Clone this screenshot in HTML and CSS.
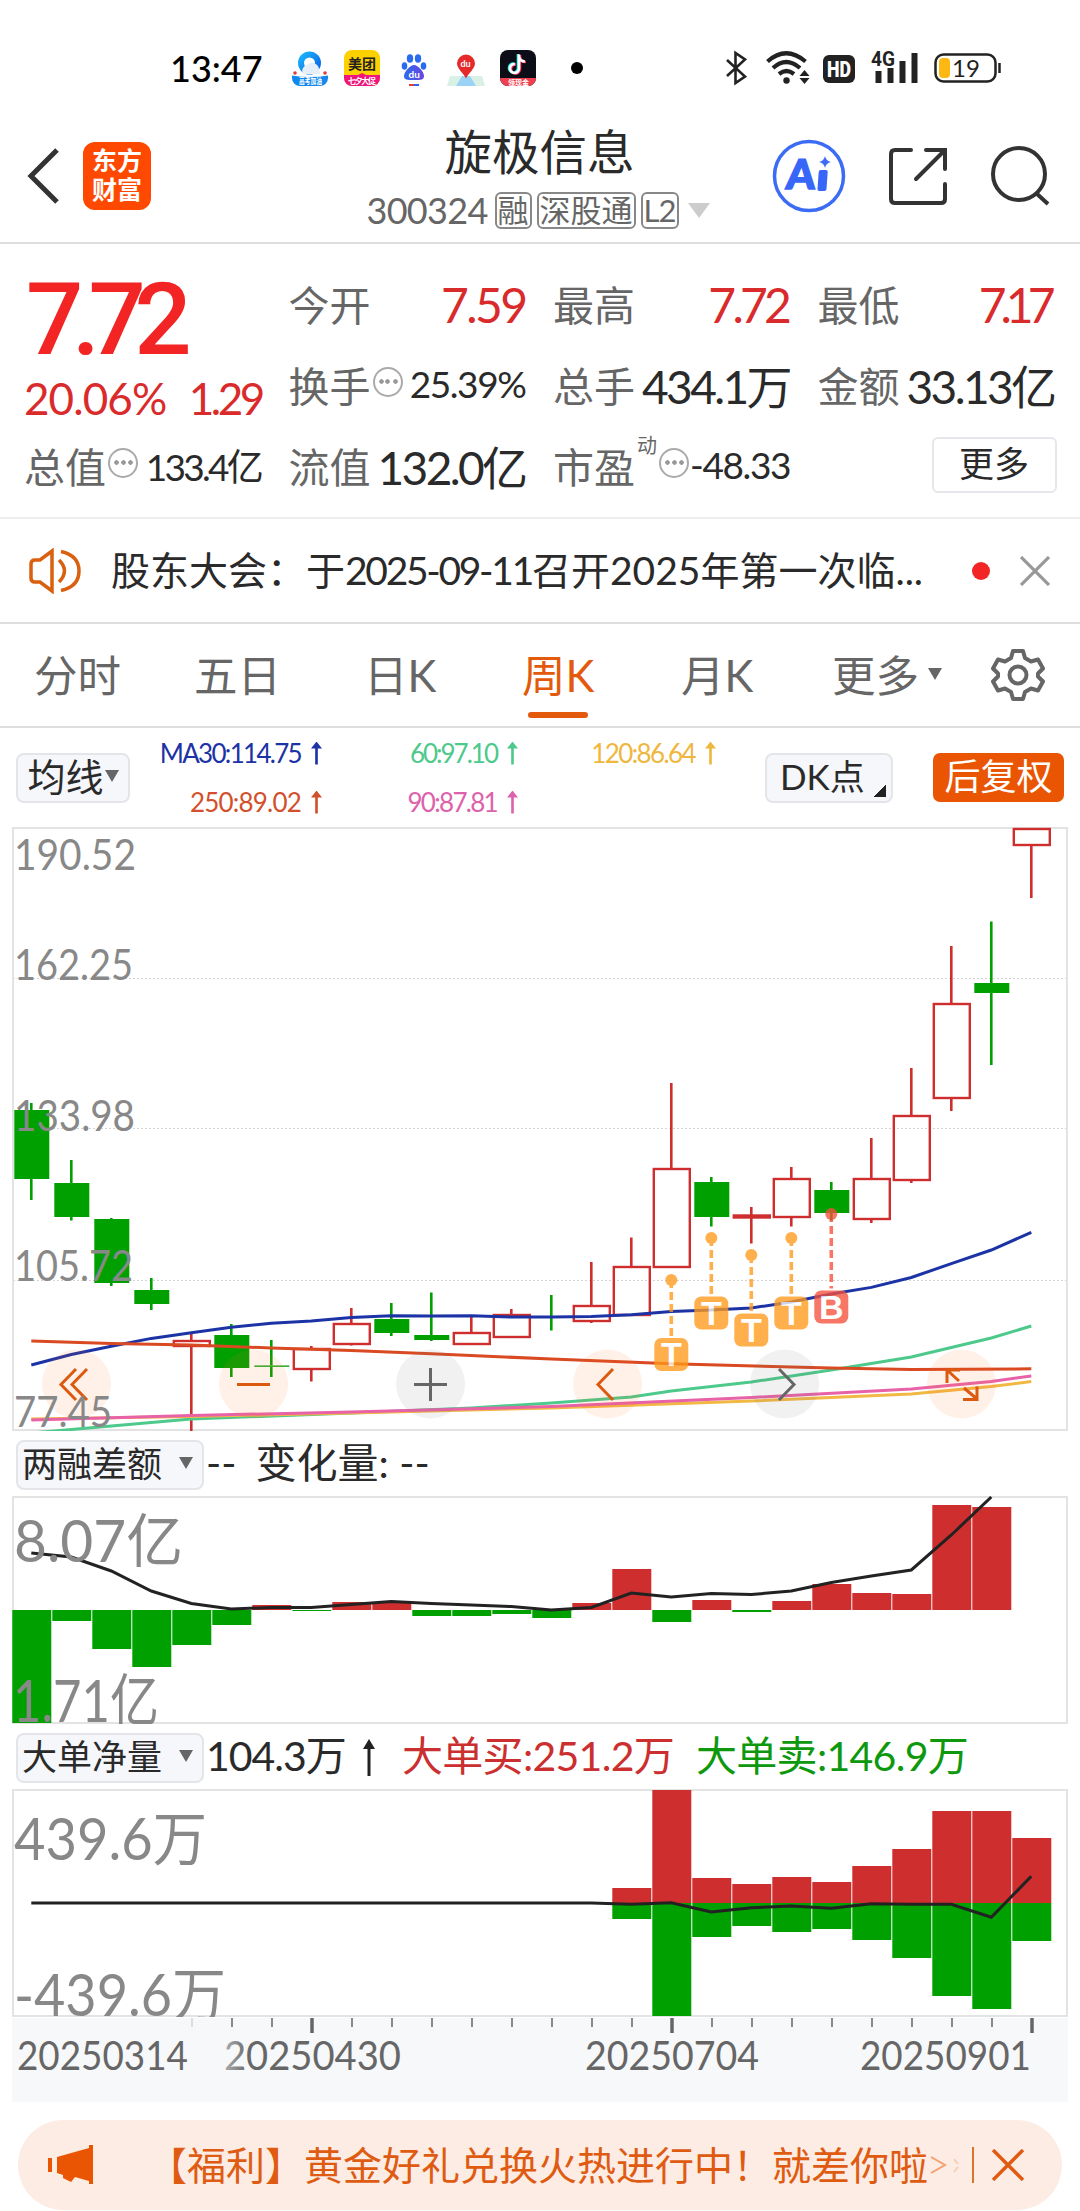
FILE: index.html
```html
<!DOCTYPE html>
<html lang="zh-CN">
<head>
    <meta charset="UTF-8">
    <meta name="viewport" content="width=device-width, initial-scale=1.0">
    <title>旋极信息 300324</title>
    <link rel="stylesheet" href="styles.css">
</head>
<body>
    <div class="status-bar">
        <span class="clock">13:47</span>
        <svg class="apps" width="300" height="40" viewBox="290 48 300 40">
            <defs>
                <linearGradient id="sky" x1="0" y1="0" x2="1" y2="1">
                    <stop offset="0" stop-color="#1cb4fa"/>
                    <stop offset="1" stop-color="#0a63e8"/>
                </linearGradient>
                <linearGradient id="paw" x1="0" y1="0" x2="1" y2="0">
                    <stop offset="0" stop-color="#2a6cf0"/>
                    <stop offset="1" stop-color="#6a45e0"/>
                </linearGradient>
                <clipPath id="r1"><rect x="292" y="50" width="36" height="36" rx="8"/></clipPath>
                <clipPath id="r2"><rect x="344" y="50" width="36" height="36" rx="8"/></clipPath>
                <clipPath id="r3"><rect x="500" y="50" width="36" height="36" rx="8"/></clipPath>
            </defs>
            <circle cx="309.500" cy="63" r="8.500" fill="none" stroke="url(#sky)" stroke-width="6"/>
            <path d="M303 74a6 6 0 0 1 4-9 7 7 0 0 1 12 4l1 5z" fill="#e6eef8"/>
            <g clip-path="url(#r1)">
                <path d="M290 75q20 4 40 0v12h-40z" fill="#1287ee"/>
                <circle cx="295" cy="73" r="1.800" fill="#e23b3b"/>
                <circle cx="325" cy="73" r="1.800" fill="#e23b3b"/>
            </g>
            <text x="299" y="84" font-size="8" font-weight="700" fill="#fff" textLength="23" lengthAdjust="spacingAndGlyphs">高考加油</text>
            <g clip-path="url(#r2)">
                <rect x="344" y="50" width="36" height="36" fill="#fdd000"/>
                <path d="M344 75h14l4-2 4 2h14v12h-36z" fill="#f0147c"/>
            </g>
            <text x="348" y="69" font-size="14" font-weight="700" fill="#222" textLength="28">美团</text>
            <text x="348" y="84" font-size="8" font-weight="700" fill="#fff" textLength="28">七夕大促</text>
            <g fill="#2a6cf0">
                <ellipse cx="404.500" cy="66" rx="2.800" ry="3.800"/>
                <ellipse cx="410" cy="58.500" rx="3.200" ry="4.200"/>
                <ellipse cx="418" cy="58.500" rx="3.200" ry="4.200"/>
                <ellipse cx="423.500" cy="66" rx="2.800" ry="3.800"/>
                <path fill="url(#paw)" d="M414 65c-4 0-10 7-10 11s3 4 10 4 10 0 10-4-6-11-10-11z"/>
            </g>
            <text x="408.500" y="78" font-size="10" font-weight="700" fill="#fff">du</text>
            <path d="M409 85h5" stroke="#e03c3c" stroke-width="2"/>
            <path d="M414 85h5" stroke="#2a6cf0" stroke-width="2"/>
            <path d="M450 76h32l3 10h-38z" fill="#d9f0e4"/>
            <path d="M462 76h8l6 10h-20z" fill="#9bd3f5"/>
            <path d="M466 54.500a9 9 0 0 1 9 9c0 5-6 9-9 15-3-6-9-10-9-15a9 9 0 0 1 9-9z" fill="#e62a2a"/>
            <text x="460.500" y="67" font-size="9" font-weight="700" fill="#fff">du</text>
            <g clip-path="url(#r3)">
                <rect x="500" y="50" width="36" height="36" fill="#0d0d18"/>
                <rect x="500" y="78" width="36" height="8" fill="#ee4050"/>
            </g>
            <g fill="none" stroke-width="2.600">
                <path d="M518 54v14a4.500 4.500 0 1 1-4-4.500M518 56q1 5 6 5" stroke="#25f4ee"/>
                <path d="M520 55v14a4.500 4.500 0 1 1-4-4.500M520 57q1 5 6 5" stroke="#fe2c55"/>
                <path d="M519 54.500v14a4.500 4.500 0 1 1-4-4.500M519 56.500q1 5 6 5" stroke="#fff"/>
            </g>
            <text x="508" y="85" font-size="7" font-weight="700" fill="#fff">领现金</text>
            <circle cx="577" cy="68" r="6" fill="#000"/>
        </svg>
        <svg class="system" width="282" height="40" viewBox="722 48 282 40" fill="none" stroke="#222">
            <path d="M727 60l18 16.500-9.500 6.500V53l9.500 6.500-18 16.500" stroke-width="2.600"/>
            <path d="M767.500 61.500q18.500-16.500 38 0M773 68q13-12 27 0M779 74q7.500-6 15 0" stroke-width="4.200"/>
            <circle cx="786.500" cy="80.500" r="3.200" fill="#222" stroke="none"/>
            <path d="M804.500 70l5 6h-10zM804.500 84l5-6h-10z" fill="#222" stroke="none"/>
            <rect x="823" y="55" width="32" height="28" rx="6" fill="#222" stroke="none"/>
            <text x="827" y="77" font-family="Roboto" font-size="22" font-weight="900" fill="#fff" stroke="none" textLength="24" lengthAdjust="spacingAndGlyphs">HD</text>
            <text x="871" y="66" font-family="Roboto" font-size="20" font-weight="700" fill="#222" stroke="none" textLength="24" lengthAdjust="spacingAndGlyphs">4G</text>
            <path d="M878.500 71v12M890.500 68v15M902.500 61v22M914.500 53v30" stroke-width="6"/>
            <rect x="935.500" y="54.500" width="60" height="27" rx="8" stroke-width="2.500"/>
            <rect x="939" y="58" width="11" height="20" rx="4" fill="#fdb813" stroke="none"/>
            <path d="M999.500 63v10" stroke-width="2.500"/>
            <text x="952" y="77" font-size="24" fill="#222" stroke="none">19</text>
        </svg>
    </div>

    <header class="header">
        <div class="header-side">
            <svg width="34" height="58" viewBox="0 0 34 58" fill="none" stroke="#333" stroke-width="5"><path d="M31 3L5 29l26 26"/></svg>
            <div class="logo"><span>东方</span><span>财富</span></div>
        </div>
        <div class="stock">
            <h1>旋极信息</h1>
            <div class="stock-code">
                <span class="code">300324</span><span class="tag">融</span><span class="tag">深股通</span><span class="tag l2">L2</span><i class="caret"></i>
            </div>
        </div>
        <div class="header-icons">
            <svg width="74" height="74" viewBox="0 0 74 74">
                <circle cx="37" cy="37" r="34.500" fill="none" stroke="#3c6cf5" stroke-width="3.500"/>
                <g fill="#3866f8" transform="skewX(-4)">
                    <text x="17" y="50" font-size="41" font-weight="900" stroke="#3866f8" stroke-width="1.500">A</text>
                    <rect x="49" y="31" width="9" height="21" rx="2"/>
                </g>
                <path d="M53 17q1 5 6 6-5 1-6 6-1-5-6-6 5-1 6-6z" fill="#3c6cf5"/>
            </svg>
            <svg width="60" height="60" viewBox="0 0 60 60" fill="none" stroke="#333" stroke-width="4" stroke-linecap="round">
                <path d="M23 4H7q-4 0-4 4v45q0 4 4 4h46q4 0 4-4V38M38 4h19v19M56 5L28 33"/>
            </svg>
            <svg width="60" height="60" viewBox="0 0 60 60" fill="none" stroke="#333" stroke-width="4">
                <circle cx="29" cy="28" r="26"/><path d="M46 47l12 11"/>
            </svg>
        </div>
    </header>

    <section class="quote">
        <div class="price">
            <strong>7.72</strong>
            <div class="change"><span>20.06%</span><span class="amount">1.29</span></div>
        </div>
        <div class="item"><label>今开</label><b class="red">7.59</b></div>
        <div class="item"><label>最高</label><b class="red high">7.72</b></div>
        <div class="item"><label>最低</label><b class="red low">7.17</b></div>
        <div class="item"><label>换手<i class="dots"></i></label><b class="small">25.39%</b></div>
        <div class="item"><label>总手</label><b>434.1万</b></div>
        <div class="item"><label>金额</label><b>33.13亿</b></div>
        <div class="item"><label>总值<i class="dots"></i></label><b class="small tight">133.4亿</b></div>
        <div class="item"><label>流值</label><b>132.0亿</b></div>
        <div class="item"><label>市盈<sup>动</sup><i class="dots"></i></label><b class="small">-48.33</b></div>
        <div class="item"><button class="more">更多</button></div>
    </section>

    <div class="notice">
        <svg width="54" height="46" viewBox="0 0 54 46" fill="none" stroke="#d9600f" stroke-width="3.500">
            <path d="M3 16q0-4 4-4h5L24 3v40L12 34H7q-4 0-4-4zM31 12q11 11 0 22M33 3.500q18 4 18 19.500T33 42.500"/>
        </svg>
        <span class="notice-text">股东大会：于<span class="date">2025-09-11</span>召开2025年第一次临...</span>
        <i class="red-dot"></i>
        <svg width="30" height="30" viewBox="0 0 30 30" stroke="#999" stroke-width="3.200"><path d="M1 1l28 28M29 1L1 29"/></svg>
    </div>

    <nav class="tabs">
        <span>分时</span>
        <span>五日</span>
        <span>日K</span>
        <span class="active">周K</span>
        <span>月K</span>
        <span class="tab-more">更多<i></i></span>
        <svg width="54" height="54" viewBox="0 0 54 54" fill="none" stroke="#666" stroke-width="4" stroke-linejoin="round">
            <path d="M22 3h10l2 7 6 3.500 7-2 5 9-5 5v3l5 5-5 9-7-2-6 3.500-2 7H22l-2-7-6-3.500-7 2-5-9 5-5v-3l-5-5 5-9 7 2 6-3.500z"/>
            <circle cx="27" cy="27" r="8.500"/>
        </svg>
    </nav>

    <div class="ma-bar">
        <button class="select">均线<i class="down"></i></button>
        <div class="ma-list">
            <span class="ma30">MA30:114.75<i></i></span>
            <span class="ma60">60:97.10<i></i></span>
            <span class="ma120">120:86.64<i></i></span>
            <span class="ma250">250:89.02<i></i></span>
            <span class="ma90">90:87.81<i></i></span>
        </div>
        <button class="select dk">DK点</button>
        <button class="adjust">后复权</button>
    </div>

    <svg id="kline" class="chart" width="1056" height="604" viewBox="12 827 1056 604"></svg>

    <div class="panel-bar">
        <button class="select wide">两融差额<i class="down"></i></button>
        <span class="value">--</span>
        <span class="value delta">变化量: --</span>
    </div>
    <svg id="margin" class="chart" width="1056" height="228" viewBox="12 1496 1056 228"></svg>

    <div class="panel-bar">
        <button class="select wide">大单净量<i class="down"></i></button>
        <span class="value net">104.3万</span>
        <svg class="rise" width="14" height="37" viewBox="0 0 14 37"><path d="M7 37V8" stroke="#222" stroke-width="3"/><path d="M7 0l6 10H1z" fill="#222"/></svg>
        <span class="value buy">大单买:251.2万</span>
        <span class="value sell">大单卖:146.9万</span>
    </div>
    <svg id="orders" class="chart" width="1056" height="228" viewBox="12 1789 1056 228"></svg>
    <svg id="dates" class="chart" width="1056" height="85" viewBox="12 2017 1056 85"></svg>

    <div class="banner">
        <svg width="46" height="40" viewBox="0 0 46 40" fill="#ea5504"><path d="M0 13h4v14H0zM9 12L41 3V0h4v39h-4v-3l-14-4-4 5-8-4v-3l-6-2z"/></svg>
        <span class="banner-text">【福利】黄金好礼兑换火热进行中！就差你啦</span>
        <svg class="arrows" width="30" height="20" viewBox="0 0 30 20" fill="none" stroke="#ea5504" stroke-width="2"><path d="M2 2l14 8-14 8" opacity=".5"/><path d="M25 4l4 5M29 12l-4 5" opacity=".2"/></svg>
        <i class="divider"></i>
        <svg width="34" height="32" viewBox="0 0 34 32" stroke="#e05a12" stroke-width="3.400"><path d="M2 1l30 30M32 1L2 31"/></svg>
    </div>
    <script src="script.js"></script>
</body>
</html>
```
FILE: styles.css
```css
:root {
    --red: #d92b2b;
    --orange: #ea5504;
    --grey: #666;
    --dark: #2a2a2a;
    --line: #ddd;
    --btn: #f6f7fb;
}

* {
    box-sizing: border-box;
}

body {
    margin: 0;
    width: 1080px;
    height: 2211px;
    overflow: hidden;
    background: #fff;
    color: var(--dark);
    font-family: Lato, "Noto Sans CJK SC", sans-serif;
}

button {
    font-family: inherit;
    color: var(--dark);
    padding: 0;
}

svg {
    flex: none;
}

i {
    font-style: normal;
}

.status-bar {
    height: 108px;
    padding: 28px 76px 0 170px;
    display: flex;
    align-items: center;
}

.clock {
    width: 120px;
    font-size: 36px;
    font-weight: 500;
    color: #000;
}

.system {
    margin-left: auto;
}

.header {
    height: 136px;
    display: flex;
    justify-content: space-between;
    border-bottom: 2px solid var(--line);
    padding: 2px 30px 0 26px;
}

.header-side {
    display: flex;
    align-items: center;
    gap: 23px;
    width: 340px;
}

.logo {
    width: 68px;
    height: 68px;
    border-radius: 12px;
    background: #ff4800;
    color: #fff;
    font-size: 25px;
    line-height: 29px;
    font-weight: 700;
    padding-top: 4px;
    text-align: center;
}

.logo span {
    display: block;
}

.stock {
    width: 346px;
    display: flex;
    flex-direction: column;
    align-items: center;
}

.stock h1 {
    margin: 14px 0 0 3px;
    font-size: 47.5px;
    line-height: 56px;
    font-weight: 400;
}

.stock-code {
    display: flex;
    align-items: center;
    margin-top: 11px;
    color: var(--grey);
    font-size: 36px;
    line-height: 38px;
}

.code {
    letter-spacing: -0.7px;
    margin-right: 7px;
}

.tag {
    height: 37px;
    line-height: 33px;
    font-size: 31px;
    border: 2px solid #888;
    border-radius: 6px;
    padding: 0 1px;
    margin-right: 5px;
}

.l2 {
    letter-spacing: -1px;
}

.caret {
    border: 11px solid transparent;
    border-top: 15px solid #ccc;
    border-bottom: 0;
    margin-left: 4px;
}

.header-icons {
    display: flex;
    align-items: center;
    justify-content: flex-end;
    gap: 42px;
    width: 340px;
}

.quote {
    height: 275px;
    padding: 18px 24px 0;
    display: grid;
    grid-template-columns: repeat(4, 238px);
    grid-auto-rows: 81px;
    column-gap: 26.5px;
    border-bottom: 2px solid #eee;
}

.price {
    grid-row: span 2;
    color: #f22424;
}

.price strong {
    display: block;
    font-family: Roboto, sans-serif;
    font-size: 101px;
    line-height: 104px;
    letter-spacing: -11.5px;
    font-weight: 500;
    margin: 6px 0 0 2px;
}

.change {
    display: flex;
    justify-content: space-between;
    font-size: 44px;
    line-height: 52px;
    letter-spacing: -0.9px;
    color: var(--red);
}

.change .amount {
    letter-spacing: -3.4px;
}

.item {
    display: flex;
    align-items: center;
    justify-content: space-between;
    white-space: nowrap;
}

.item label {
    display: flex;
    align-items: center;
    font-size: 41px;
    color: var(--grey);
}

.item b {
    font-size: 46px;
    font-weight: 400;
    letter-spacing: -2.6px;
    margin-right: 1px;
}

.item .red {
    color: var(--red);
    font-size: 48px;
    margin-top: 3px;
}

.item .high {
    letter-spacing: -3.8px;
    margin-right: 3px;
}

.item .low {
    letter-spacing: -6px;
    margin-right: 6px;
}

.item .small {
    font-size: 37px;
    letter-spacing: -1.4px;
}

.item .tight {
    letter-spacing: -2.7px;
}

.dots {
    width: 30px;
    height: 30px;
    border: 2px solid #aaa;
    border-radius: 50%;
    margin: -4px 0 0 2px;
    background: radial-gradient(circle, #999 2px, transparent 2.5px) center / 7px 7px no-repeat,
        radial-gradient(circle, #999 2px, transparent 2.5px) 3px center / 7px 7px no-repeat,
        radial-gradient(circle, #999 2px, transparent 2.5px) 17px center / 7px 7px no-repeat;
}

.item sup {
    font-size: 20px;
    line-height: 20px;
    margin: -40px 0 0 2px;
}

.more {
    width: 125px;
    height: 56px;
    margin: 0 -1px 0 auto;
    background: #fff;
    border: 2px solid #e6e7ea;
    border-radius: 6px;
    font-size: 35px;
    line-height: 40px;
    padding-bottom: 3px;
}

.notice {
    height: 105px;
    display: flex;
    align-items: center;
    padding: 0 30px 0 28px;
    border-bottom: 2px solid var(--line);
}

.notice-text {
    width: 860px;
    padding: 0 0 5px 29px;
    font-size: 39px;
    white-space: nowrap;
}

.date {
    letter-spacing: -2.3px;
}

.red-dot {
    width: 18px;
    height: 18px;
    border-radius: 50%;
    background: #f22424;
    margin: 0 30px 0 auto;
}

.tabs {
    height: 104px;
    display: grid;
    grid-template-columns: 160px 170px 158px 159px 151px 159px 54px;
    align-items: center;
    justify-items: start;
    padding: 0 34px;
    border-bottom: 2px solid var(--line);
    font-size: 43.5px;
    color: var(--grey);
}

.tabs span {
    margin-top: -3px;
}

.tabs .active {
    position: relative;
    color: #e35a0c;
}

.tabs .active::after {
    content: "";
    position: absolute;
    left: 6px;
    bottom: -13px;
    width: 60px;
    height: 6px;
    border-radius: 3px;
    background: #e35a0c;
}

.tab-more {
    display: flex;
    align-items: center;
    gap: 9px;
}

.tab-more i,
.down {
    border: 7px solid transparent;
    border-top: 12px solid var(--grey);
    border-bottom: 0;
}

.ma-bar {
    height: 99px;
    display: flex;
    align-items: center;
    padding: 0 16px;
}

.select {
    display: flex;
    align-items: center;
    justify-content: center;
    height: 50px;
    width: 114px;
    gap: 1px;
    font-size: 38px;
    line-height: 44px;
    padding-bottom: 3px;
    background: var(--btn);
    border: 2px solid #e3e5e9;
    border-radius: 8px;
}

.ma-list {
    display: grid;
    grid-template-columns: 192px 196px 198px;
    grid-auto-rows: 49px;
    align-items: center;
    font-size: 26px;
}

.ma-list span {
    display: flex;
    align-items: center;
    justify-content: flex-end;
}

.ma-list i {
    width: 11px;
    height: 23px;
    margin-left: 10px;
    background: currentColor;
    clip-path: polygon(50% 0, 100% 30%, 62% 30%, 62% 100%, 38% 100%, 38% 30%, 0 30%);
}

.ma30 {
    color: #1c33a5;
    letter-spacing: -1.7px;
}

.ma60 {
    color: #4dc98b;
    letter-spacing: -2px;
}

.ma120 {
    color: #efb73e;
    letter-spacing: -1.6px;
}

.ma250 {
    color: #d2502c;
    letter-spacing: -0.8px;
}

.ma90 {
    color: #dd62ab;
    letter-spacing: -1.7px;
}

.dk {
    width: 128px;
    margin-left: 49px;
    justify-content: flex-start;
    padding-left: 13px;
    font-size: 35px;
    background: linear-gradient(135deg, transparent 50%, #222 50%) 107px 30px / 12px 12px no-repeat var(--btn);
}

.adjust {
    width: 131px;
    height: 49px;
    margin-left: auto;
    border: 0;
    border-radius: 7px;
    background: var(--orange);
    color: #fff;
    font-size: 36px;
    line-height: 44px;
    padding-bottom: 3px;
}

.chart {
    display: block;
    margin-left: 12px;
}

.panel-bar {
    height: 65px;
    display: flex;
    align-items: center;
    padding: 2px 16px 0;
}

.wide {
    width: 188px;
    justify-content: flex-start;
    padding-left: 4px;
    gap: 17px;
    font-size: 35px;
}

.value {
    font-size: 41px;
    line-height: 50px;
    white-space: nowrap;
    margin: -3px 0 0 2px;
}

.delta {
    margin-left: 19px;
}

.net {
    width: 141px;
    letter-spacing: -1px;
}

.rise {
    margin: 0 26px 0 15px;
}

.buy,
.sell {
    margin-left: 0;
    width: 294px;
    letter-spacing: -0.7px;
    color: #cb2f2f;
}

.sell {
    color: #0d980d;
}

.banner {
    width: 1044px;
    height: 90px;
    margin: 18px 0 0 18px;
    padding: 0 37px 0 30px;
    border-radius: 45px;
    background: #fcece3;
    display: flex;
    align-items: center;
}

.banner-text {
    margin: -5px 0 0 54px;
    font-size: 39px;
    color: #df5b12;
    white-space: nowrap;
}

.arrows {
    margin-left: 1px;
}

.divider {
    width: 2px;
    height: 36px;
    margin: 0 17px 0 auto;
    background: #d9752f;
}
```
FILE: script.js
```js
const STEP = 40;
const FIRST = 31.3;
const RED = '#ce2f2e';
const GREEN = '#00a000';
const cx = i => FIRST + STEP * i;

// [up, high, bodyTop, bodyBottom, low]
const candles = [
    [0, 1103, 1110, 1179, 1200], [0, 1160, 1183, 1217, 1220.5], [0, 1218, 1219, 1283, 1286],
    [0, 1278, 1290, 1304, 1310], [1, 1332, 1341, 1346, 1431], [0, 1324, 1335, 1368, 1377],
    [0, 1340, 1365.5, 1366.8, 1377], [1, 1346, 1349, 1369, 1381.5], [1, 1308, 1324, 1344, 1345.5],
    [0, 1303, 1319, 1333, 1336], [0, 1292.5, 1335, 1340, 1341], [1, 1315, 1333, 1344, 1344],
    [1, 1309, 1315, 1337, 1338], [0, 1295, 1316, 1317.5, 1330.5], [1, 1262, 1306, 1321, 1323],
    [1, 1237.5, 1267, 1315, 1315], [1, 1083, 1169, 1267, 1267], [0, 1177, 1182, 1217, 1226.5],
    [1, 1207, 1215.5, 1217.5, 1243.5], [1, 1167, 1179, 1217, 1226.5], [0, 1182, 1190, 1213, 1220.5],
    [1, 1138, 1179, 1219, 1223], [1, 1068, 1116, 1180, 1183], [1, 946, 1004, 1098, 1111],
    [0, 921.5, 983, 993, 1065], [1, 829, 829, 845, 898]
];

const averages = [
    ['#4dc98b', [[0, 1433], [2, 1426], [4, 1419], [8, 1413], [11, 1408], [13, 1403], [15, 1397], [16, 1391], [18, 1382], [20, 1370], [22, 1357], [24, 1338], [25, 1326]]],
    ['#f2b844', [[0, 1419], [4, 1416.5], [8, 1413], [13, 1408], [18, 1401], [22, 1394], [24, 1386.5], [25, 1381.5]]],
    ['#e862a8', [[0, 1420], [4, 1415.5], [8, 1412], [13, 1406.5], [18, 1397.5], [22, 1389], [24, 1381.5], [25, 1376]]],
    ['#1c33a5', [1365, 1354.5, 1346.3, 1338.4, 1332.8, 1327.3, 1323.3, 1321, 1317.4, 1315.8, 1316, 1315.8, 1317, 1317, 1316.6, 1314.7, 1311.5, 1310, 1308, 1302, 1294, 1287.4, 1277.5, 1263.6, 1250, 1232.4].map((y, i) => [i, y])],
    ['#d94a22', [[0, 1341], [2, 1343.5], [4, 1345], [6, 1348], [8, 1350.6], [10, 1353.8], [13, 1359], [16, 1363.7], [20, 1368], [22, 1369.6], [25, 1368.8]]]
];

// [slot, dot, badge top, letter]
const marks = [
    [16, 1280, 1338, 'T'], [17, 1238, 1296.5, 'T'], [18, 1255, 1313.5, 'T'], [19, 1238, 1296.5, 'T'], [20, 1214, 1290.5, 'B']
];

const path = pts => 'M' + pts.map(p => cx(p[0]) + ' ' + p[1]).join('L');
const rect = (x, y, w, h, attrs) => `<rect x="${x}" y="${y}" width="${w}" height="${h}" ${attrs}/>`;
const label = (t, x, y, len, size) => `<text x="${x}" y="${y}" font-size="${size}" textLength="${len}" lengthAdjust="spacingAndGlyphs" fill="#888">${t}</text>`;

function drawKline() {
    let s = '';
    [978.5, 1128.5, 1280.5].forEach(y => {
        s += `<path d="M13 ${y}H1067" stroke="#d4d4d4" stroke-dasharray="2 2"/>`;
    });
    s += rect(13, 828, 1054, 602, 'fill="none" stroke="#e3e3e3" stroke-width="2"');
    candles.forEach(([up, hi, top, bottom, low], i) => {
        const color = up ? RED : GREEN;
        const x = cx(i);
        s += `<path d="M${x} ${hi}V${top}M${x} ${bottom}V${low}" stroke="${color}" stroke-width="2.6"/>`;
        s += up
            ? rect(x - 17.5, top, 36, bottom - top, `fill="none" stroke="${color}" stroke-width="2.4"`)
            : rect(x - 17, top, 35, bottom - top, `fill="${color}"`);
    });
    averages.forEach(([color, pts]) => {
        s += `<path d="${path(pts)}" fill="none" stroke="${color}" stroke-width="3"/>`;
    });
    marks.forEach(([i, dot, top, letter]) => {
        const color = letter === 'B' ? '#f5503c' : '#ff9a1a';
        const x = cx(i);
        s += `<g opacity=".78"><circle cx="${x}" cy="${dot}" r="6" fill="${color}"/>
            <path d="M${x} ${dot}V${top - 2}" stroke="${color}" stroke-width="3.6" stroke-dasharray="8 4"/>
            ${rect(x - 17, top, 34, 33, `rx="7" fill="${color}"`)}
            <text x="${x}" y="${top + 28}" font-family="Liberation Sans" font-size="34" font-weight="700" fill="#fff" text-anchor="middle">${letter}</text></g>`;
    });
    [76.5, 253.5, 430.5, 607.5, 784.5, 961.5].forEach((x, i) => {
        s += `<circle cx="${x}" cy="1384" r="34.5" fill="${i === 2 || i === 4 ? '#777' : '#ff6a1a'}" opacity=".1"/>`;
    });
    s += `<g fill="none" stroke="#dc5a10" stroke-width="3">
        <path d="M76 1369l-15 15.5 15 15.5M87 1369l-15 15.5 15 15.5M237 1384.5h33M613 1369l-15 15.5 15 15.5"/>
        <path d="M947 1383v-13h13M947 1370l12 11M963 1399.500h14v-13M977 1399l-13-11"/></g>
        <path d="M414 1384.5h33M430.5 1368v33M779 1369l15 15.5-15 15.5" fill="none" stroke="#666" stroke-width="3"/>`;
    s += label('190.52', 14, 869.5, 122, 43) + label('162.25', 14, 979.5, 119, 43) +
        label('133.98', 14, 1131, 121, 43) + label('105.72', 14, 1281, 119, 43) + label('77.45', 14, 1427, 98, 43);
    document.getElementById('kline').innerHTML = s;
}

function bars(values, zero) {
    return values.map((v, i) => v ? rect(12.3 + STEP * i, v > 0 ? zero - v : zero, 39, Math.abs(v), `fill="${v > 0 ? RED : GREEN}"`) : '').join('');
}

const curve = ys => `<path d="${path(ys.map((y, i) => [i, y]))}" fill="none" stroke="#222" stroke-width="3"/>`;

function drawMargin() {
    const diff = [-113, -11, -39, -57, -35, -15, 5, -1, 8, 8, -6, -6, -4, -8, 7, 41, -12, 10, -2, 9, 26, 17, 16, 105, 103];
    const line = [1553, 1557, 1571, 1591, 1603.5, 1609, 1607.5, 1607.5, 1604.5, 1601.5, 1603.5, 1605, 1606.5, 1610, 1607.5, 1593, 1597, 1593.5, 1594.5, 1591, 1582.5, 1576, 1570, 1535, 1497];
    document.getElementById('margin').innerHTML =
        rect(13, 1497, 1054, 226, 'fill="none" stroke="#e3e3e3" stroke-width="2"') +
        bars(diff, 1610) + curve(line) +
        label('8.07亿', 14, 1562, 169, 58) + label('1.71亿', 13, 1722, 146, 58);
}

function drawOrders() {
    const none = new Array(15).fill(0);
    const buy = none.concat([15, 113, 25, 19, 26, 21, 37, 54, 92, 92, 65]);
    const sell = none.concat([-16, -113, -34, -23, -29, -26, -37, -55, -93, -106, -38]);
    const line = new Array(15).fill(1903).concat([1904.3, 1902.7, 1912, 1907.7, 1906, 1908.3, 1903.7, 1904.3, 1904.3, 1917.3, 1876.3]);
    document.getElementById('orders').innerHTML =
        rect(13, 1790, 1054, 226, 'fill="none" stroke="#e3e3e3" stroke-width="2"') +
        bars(buy, 1903) + bars(sell, 1903) + curve(line) +
        label('439.6万', 14, 1860, 193, 58) + label('-439.6万', 14, 2015.5, 212, 58);
}

function drawDates() {
    let s = '<defs><linearGradient id="fade" gradientUnits="userSpaceOnUse" x1="225" x2="250" y1="0" y2="0"><stop offset="0" stop-color="#aaa"/><stop offset="1" stop-color="#666"/></linearGradient></defs>' +
        rect(12, 2018, 1056, 84, 'fill="#f7f8fa"');
    for (let i = 4; i < 26; i++) {
        const big = i % 9 === 7;
        s += `<path d="M${cx(i) + 0.7} 2018v${big ? 15 : 9}" stroke="${i === 4 ? '#ddd' : big ? '#666' : '#888'}" stroke-width="${big ? 3.5 : 2}"/>`;
    }
    [['20250314', 17, 171], ['20250430', 224, 177], ['20250704', 585, 174], ['20250901', 860, 171]].forEach(([t, x, w], i) => {
        s += label(t, x, 2070, w, 40).replace('#888', i === 1 ? 'url(#fade)' : '#666');
    });
    document.getElementById('dates').innerHTML = s;
}

drawKline();
drawMargin();
drawOrders();
drawDates();
```
